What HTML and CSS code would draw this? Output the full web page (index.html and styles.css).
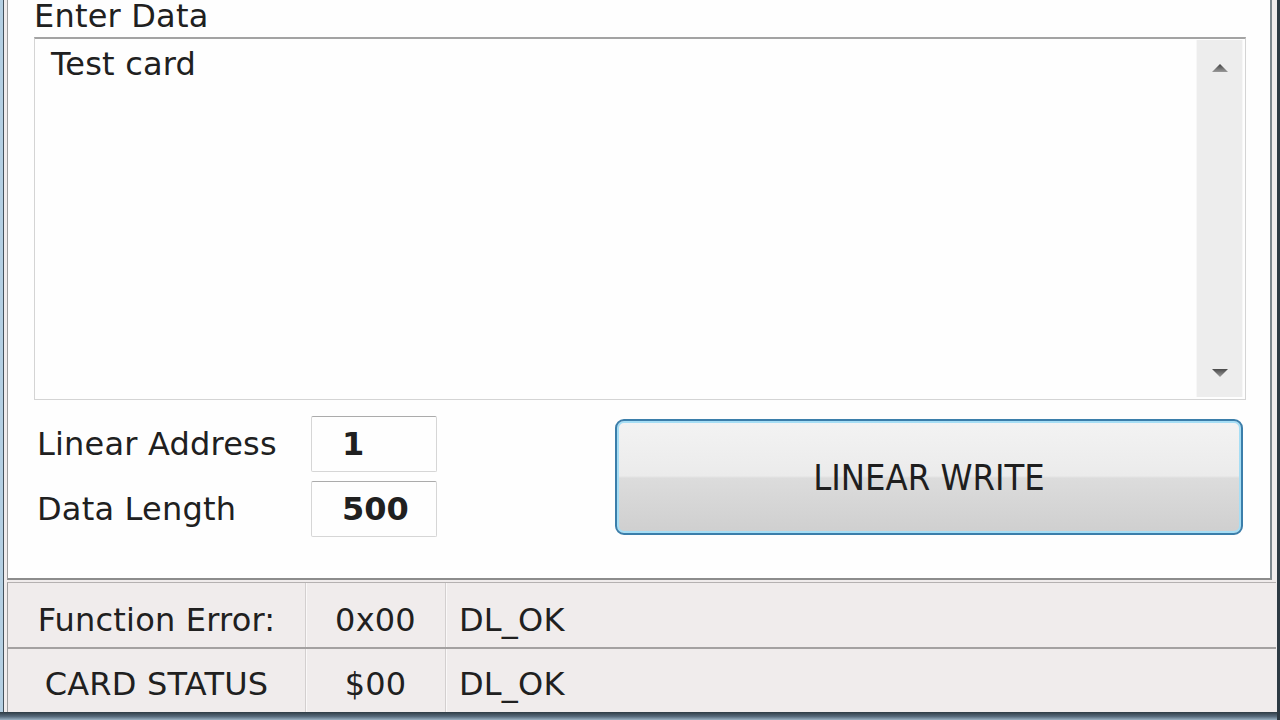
FILE: index.html
```html
<!DOCTYPE html>
<html lang="en">
<head>
    <meta charset="UTF-8">
    <meta name="viewport" content="width=device-width, initial-scale=1.0">
    <title>Linear Write</title>
    <link rel="stylesheet" href="styles.css">
</head>
<body>
    <div class="window">
        <div class="client">
            <div class="group">
                <div class="caption">Enter Data</div>
                <div class="memo">
                    <div class="memo-text">Test card</div>
                    <div class="scrollbar">
                        <svg class="arrow" width="16" height="8" viewBox="0 0 16 8">
                            <defs>
                                <linearGradient id="arrow-up" x1="0" y1="0" x2="0" y2="1">
                                    <stop offset="0" stop-color="#3f3f3f"/>
                                    <stop offset="1" stop-color="#9a9a9a"/>
                                </linearGradient>
                            </defs>
                            <polygon points="8,0 16,8 0,8" fill="url(#arrow-up)"/>
                        </svg>
                        <svg class="arrow" width="16" height="8" viewBox="0 0 16 8">
                            <defs>
                                <linearGradient id="arrow-down" x1="0" y1="0" x2="0" y2="1">
                                    <stop offset="0" stop-color="#4a4a4a"/>
                                    <stop offset="1" stop-color="#9a9a9a"/>
                                </linearGradient>
                            </defs>
                            <polygon points="0,0 16,0 8,8" fill="url(#arrow-down)"/>
                        </svg>
                    </div>
                </div>
                <div class="controls">
                    <div class="fields">
                        <div class="field">
                            <span class="field-label">Linear Address</span>
                            <div class="field-box">1</div>
                        </div>
                        <div class="field">
                            <span class="field-label">Data Length</span>
                            <div class="field-box">500</div>
                        </div>
                    </div>
                    <button class="write-btn" id="write-btn">LINEAR WRITE</button>
                </div>
            </div>
            <div class="status">
                <div class="status-row">
                    <div class="cell cell-name">Function Error:</div>
                    <div class="cell cell-code">0x00</div>
                    <div class="cell cell-msg">DL_OK</div>
                </div>
                <div class="status-row">
                    <div class="cell cell-name">CARD STATUS</div>
                    <div class="cell cell-code">$00</div>
                    <div class="cell cell-msg">DL_OK</div>
                </div>
            </div>
        </div>
        <div class="window-bottom"></div>
    </div>
</body>
</html>
```

FILE: styles.css
```css
* {
    box-sizing: border-box;
}
body {
    margin: 0;
    font-family: "DejaVu Sans", Verdana, sans-serif;
    font-size: 32px;
    line-height: 36px;
    letter-spacing: 0.2px;
    color: #202020;
    background-color: #aac6da;
}
.window {
    width: 1280px;
    height: 720px;
    display: flex;
    flex-direction: column;
    padding-left: 3px;
    border-right: 3px solid #2d3a43;
    background-color: #b4cfe2;
}
.client {
    flex: 1;
    display: flex;
    flex-direction: column;
    padding-left: 3px;
    border-left: 1px solid #44525c;
    background-color: #f0ecec;
}
.window-bottom {
    height: 8px;
    margin-left: -3px;
    background: linear-gradient(#2e3b44, #56697a 55%, #9bb2c3);
}

/* group box */
.group {
    height: 580px;
    margin-right: 5px;
    padding: 0 24px 0 26px;
    background-color: #fefefe;
    border-left: 1px solid #9c9c9c;
    border-right: 2px solid #7f898f;
    border-bottom: 2px solid #8c8c8c;
}
.caption {
    height: 31px;
    line-height: 31px;
    padding-top: 1px;
}
.memo {
    margin-top: 6px;
    height: 363px;
    display: flex;
    padding: 1px 2px 2px 0;
    border: 1px solid #d4d4d4;
    border-top: 2px solid #a3a3a3;
}
.memo-text {
    flex: 1;
    padding: 6px 0 0 16px;
}
.scrollbar {
    width: 47px;
    display: flex;
    flex-direction: column;
    justify-content: space-between;
    align-items: center;
    padding: 24px 0 20px;
    background-color: #ededed;
    border-left: 1px solid #f7f7f7;
    border-right: 1px solid #f7f7f7;
}
.arrow {
    display: block;
}

/* address / length + button */
.controls {
    display: flex;
    margin-top: 16px;
}
.fields {
    display: flex;
    flex-direction: column;
    gap: 9px;
    padding-left: 3px;
}
.field {
    display: flex;
    align-items: center;
}
.field-label {
    width: 274px;
}
.field-box {
    width: 126px;
    height: 56px;
    padding: 9px 0 0 30px;
    font-weight: bold;
    letter-spacing: 0;
    border: 1px solid #d6d6d6;
    border-top-color: #ababab;
    border-radius: 2px;
}
.write-btn {
    width: 628px;
    height: 116px;
    margin: 3px 3px 0 auto;
    padding: 0;
    font-family: "DejaVu Sans Condensed", "DejaVu Sans", sans-serif;
    font-stretch: condensed;
    font-size: 36px;
    letter-spacing: 0;
    color: #1e1e1e;
    border: 2px solid #3b7eaa;
    border-radius: 9px;
    box-shadow: inset 0 0 0 2px #a6def5;
    background: linear-gradient(#f3f3f3, #ebebeb 49%, #dcdcdc 51%, #cfcfcf);
    cursor: pointer;
}

/* status strip */
.status {
    flex: 1;
    display: flex;
    flex-direction: column;
    margin: 2px 1px 0 0;
    border-top: 1px solid #b5b1b1;
    border-left: 1px solid #9c9c9c;
}
.status-row {
    display: flex;
    height: 66px;
    border-bottom: 2px solid #a4a1a1;
}
.status-row:last-child {
    flex: 1;
    height: auto;
    border-bottom: none;
}
.cell {
    padding-top: 19px;
}
.status-row:last-child .cell {
    padding-top: 17px;
}
.cell-name {
    width: 297px;
    text-align: center;
}
.cell-code {
    width: 140px;
    text-align: center;
    border-left: 1px solid #d3cfcf;
    box-shadow: inset 1px 0 #faf8f8;
}
.cell-msg {
    flex: 1;
    padding-left: 13px;
    border-left: 1px solid #d3cfcf;
    box-shadow: inset 1px 0 #faf8f8;
}
```
